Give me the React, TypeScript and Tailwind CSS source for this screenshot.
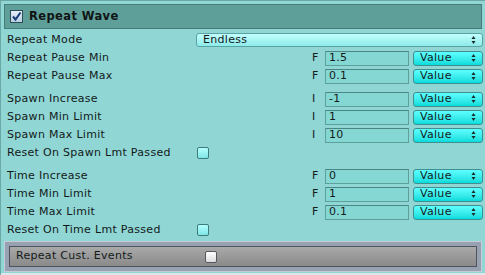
import React from "react";

const Arrows = () => (
  <svg width="5" height="8" viewBox="0 0 5 8" className="shrink-0">
    <path d="M2.5 0 L4.5 3 L0.5 3 Z" fill="#1a2a2a" />
    <path d="M0.5 5 L4.5 5 L2.5 8 Z" fill="#1a2a2a" />
  </svg>
);

const ValueSelect = () => (
  <div className="ml-[4px] w-[70px] h-[15px] rounded-[3px] border border-[#3f8f8f] bg-gradient-to-b from-[#5cffff] to-[#00dcdc] flex items-center justify-between pl-[6px] pr-[6px]">
    <span>Value</span>
    <Arrows />
  </div>
);

const Field = ({ label, type, value }: { label: string; type: string; value: string }) => (
  <div className="h-[18px] flex items-center">
    <span className="flex-1">{label}</span>
    <span className="w-[13px]">{type}</span>
    <div className="w-[84px] h-[15px] border border-[#5c9f9b] border-t-[#4a8784] bg-[#85d7d3] flex items-center pl-[3px]">
      {value}
    </div>
    <ValueSelect />
  </div>
);

const Toggle = ({ label }: { label: string }) => (
  <div className="h-[18px] flex items-center">
    <span className="w-[190px]">{label}</span>
    <div className="w-[12px] h-[12px] rounded-[2px] border border-[#3e7c79] bg-gradient-to-b from-[#b4ffff] to-[#7ee6e6]" />
  </div>
);

const App = () => {
  return (
    <div className="w-[485px] h-[275px] bg-[#8fd6d4] border-l border-t border-[#6aa8a5] font-['DejaVu_Sans',sans-serif] text-[11px] tracking-[0.3px] text-[#141a1a] flex flex-col overflow-hidden">
      <div className="mx-[3px] mt-[3px] h-[25px] bg-[#5f9f9a] border border-[#457c78] flex items-center pl-[5px] gap-[6px]">
        <div className="w-[13px] h-[13px] border border-[#2c4a5a] bg-gradient-to-b from-[#e4eef6] to-[#b8cfe0] flex items-center justify-center">
          <svg width="11" height="11" viewBox="0 0 11 11">
            <path d="M2 5.5 L4.5 8.5 L9.5 1.5" stroke="#183c78" strokeWidth="2" fill="none" />
          </svg>
        </div>
        <span className="font-bold text-[11.5px] tracking-[0.4px] text-[#101414]">Repeat Wave</span>
      </div>

      <div className="pl-[6px] pr-[2px] mt-[2px] flex flex-col">
        <div className="h-[18px] flex items-center">
          <span className="w-[189px]">Repeat Mode</span>
          <div className="flex-1 h-[14px] rounded-[3px] border border-[#5aa3a3] bg-gradient-to-b from-[#c2ffff] to-[#8eeaea] flex items-center justify-between pl-[6px] pr-[6px]">
            <span>Endless</span>
            <Arrows />
          </div>
        </div>
        <Field label="Repeat Pause Min" type="F" value="1.5" />
        <Field label="Repeat Pause Max" type="F" value="0.1" />

        <div className="mt-[5px]">
          <Field label="Spawn Increase" type="I" value="-1" />
          <Field label="Spawn Min Limit" type="I" value="1" />
          <Field label="Spawn Max Limit" type="I" value="10" />
          <Toggle label="Reset On Spawn Lmt Passed" />
        </div>

        <div className="mt-[5px]">
          <Field label="Time Increase" type="F" value="0" />
          <Field label="Time Min Limit" type="F" value="1" />
          <Field label="Time Max Limit" type="F" value="0.1" />
          <Toggle label="Reset On Time Lmt Passed" />
        </div>
      </div>

      <div className="mx-[3px] mt-[2px] h-[31px] border border-[#c4ccd6] bg-[#97a1b1] p-[4px]">
        <div className="h-full border border-[#4e535d] bg-gradient-to-b from-[#a9a9a9] to-[#8a8a8a] flex items-center pl-[6px]">
          <span className="w-[189px]">Repeat Cust. Events</span>
          <div className="w-[12px] h-[12px] rounded-[2px] border border-[#555a60] bg-gradient-to-b from-[#ffffff] to-[#dcdcdc]" />
        </div>
      </div>
      <div className="flex-1" />
      <div className="h-[2px] bg-[#dfe6e8]" />
    </div>
  );
};

export default App;
